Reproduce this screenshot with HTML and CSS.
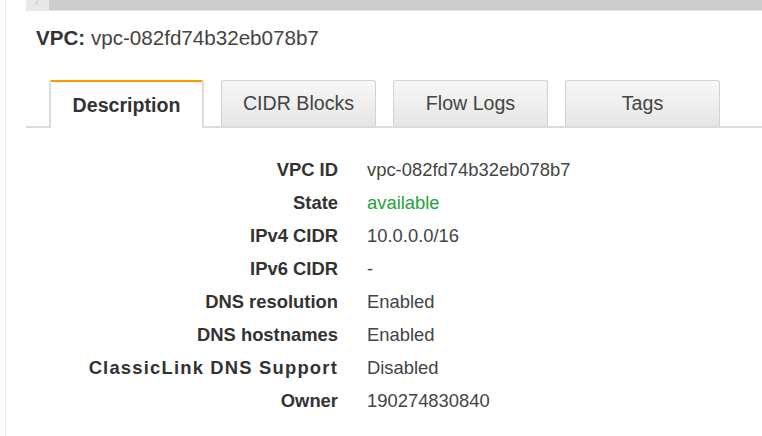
FILE: index.html
```html
<!DOCTYPE html>
<html>
<head>
<meta charset="utf-8">
<link rel="stylesheet" href="styles.css">
</head>
<body>
<div class="frame">
  <div class="panel">
    <div class="scrollbar">
      <div class="scroll-btn"><svg width="4" height="6" viewBox="0 0 4 6"><path d="M3.5 0.5 L1 3 L3.5 5.5" fill="none" stroke="#c4c4c4" stroke-width="1"/></svg></div>
      <div class="scroll-track"></div>
    </div>
    <div class="header"><span class="header-key">VPC:</span> vpc-082fd74b32eb078b7</div>
    <div class="tabs">
      <div class="tab active">Description</div>
      <div class="tab">CIDR Blocks</div>
      <div class="tab">Flow Logs</div>
      <div class="tab">Tags</div>
    </div>
    <div class="details">
      <div class="label">VPC ID</div><div class="value">vpc-082fd74b32eb078b7</div>
      <div class="label">State</div><div class="value green">available</div>
      <div class="label">IPv4 CIDR</div><div class="value">10.0.0.0/16</div>
      <div class="label">IPv6 CIDR</div><div class="value">-</div>
      <div class="label">DNS resolution</div><div class="value">Enabled</div>
      <div class="label">DNS hostnames</div><div class="value">Enabled</div>
      <div class="label label-wide">ClassicLink DNS Support</div><div class="value">Disabled</div>
      <div class="label">Owner</div><div class="value">190274830840</div>
    </div>
  </div>
</div>
</body>
</html>
```
FILE: styles.css
```css
html, body {
  margin: 0;
  padding: 0;
  background: #fff;
}
body {
  font-family: "Liberation Sans", Arial, sans-serif;
  color: #444;
  width: 762px;
  height: 436px;
  overflow: hidden;
}
.frame {
  padding-left: 5px;
  height: 436px;
}
.panel {
  border-left: 1px solid #e8e8e8;
  height: 436px;
  padding-left: 20px;
}
.scrollbar {
  display: flex;
  height: 10px;
  border-bottom: 1px solid #e4e4e4;
}
.scroll-btn {
  width: 23px;
  background: #e8e8e8;
  display: flex;
  align-items: flex-start;
  padding-left: 9px;
  box-sizing: border-box;
}
.scroll-btn svg {
  display: block;
}
.scroll-track {
  flex: 1;
  background: #cdcdcd;
}
.header {
  margin-top: 15px;
  padding-left: 10px;
  font-size: 20.6px;
  line-height: 24px;
  color: #444;
}
.header-key {
  font-weight: bold;
  color: #333;
}
.tabs {
  display: flex;
  gap: 17px;
  margin-top: 30px;
  padding-left: 23px;
  border-bottom: 2px solid #dcdcdc;
  height: 46px;
}
.tab {
  width: 155px;
  box-sizing: border-box;
  height: 46px;
  border: 1px solid #d2d2d2;
  border-bottom: none;
  border-radius: 3px 3px 0 0;
  background: linear-gradient(#f7f7f7, #e6e6e6);
  font-size: 19.6px;
  color: #444;
  display: flex;
  align-items: center;
  justify-content: center;
}
.tab.active {
  background: #fff;
  border-top: 2px solid #ff9900;
  border-color: #ff9900 #dcdcdc #dcdcdc #dcdcdc;
  border-left-width: 2px;
  border-right-width: 2px;
  height: 48px;
  margin-bottom: -2px;
  font-weight: bold;
  color: #333;
}
.details {
  display: grid;
  grid-template-columns: 312px auto;
  column-gap: 29px;
  margin-top: 25px;
  font-size: 18.4px;
  line-height: 33px;
}
.label {
  text-align: right;
  font-weight: bold;
  color: #333;
}
.label-wide {
  letter-spacing: 1.2px;
}
.value {
  color: #444;
}
.green {
  color: #1fa33a;
}
```
